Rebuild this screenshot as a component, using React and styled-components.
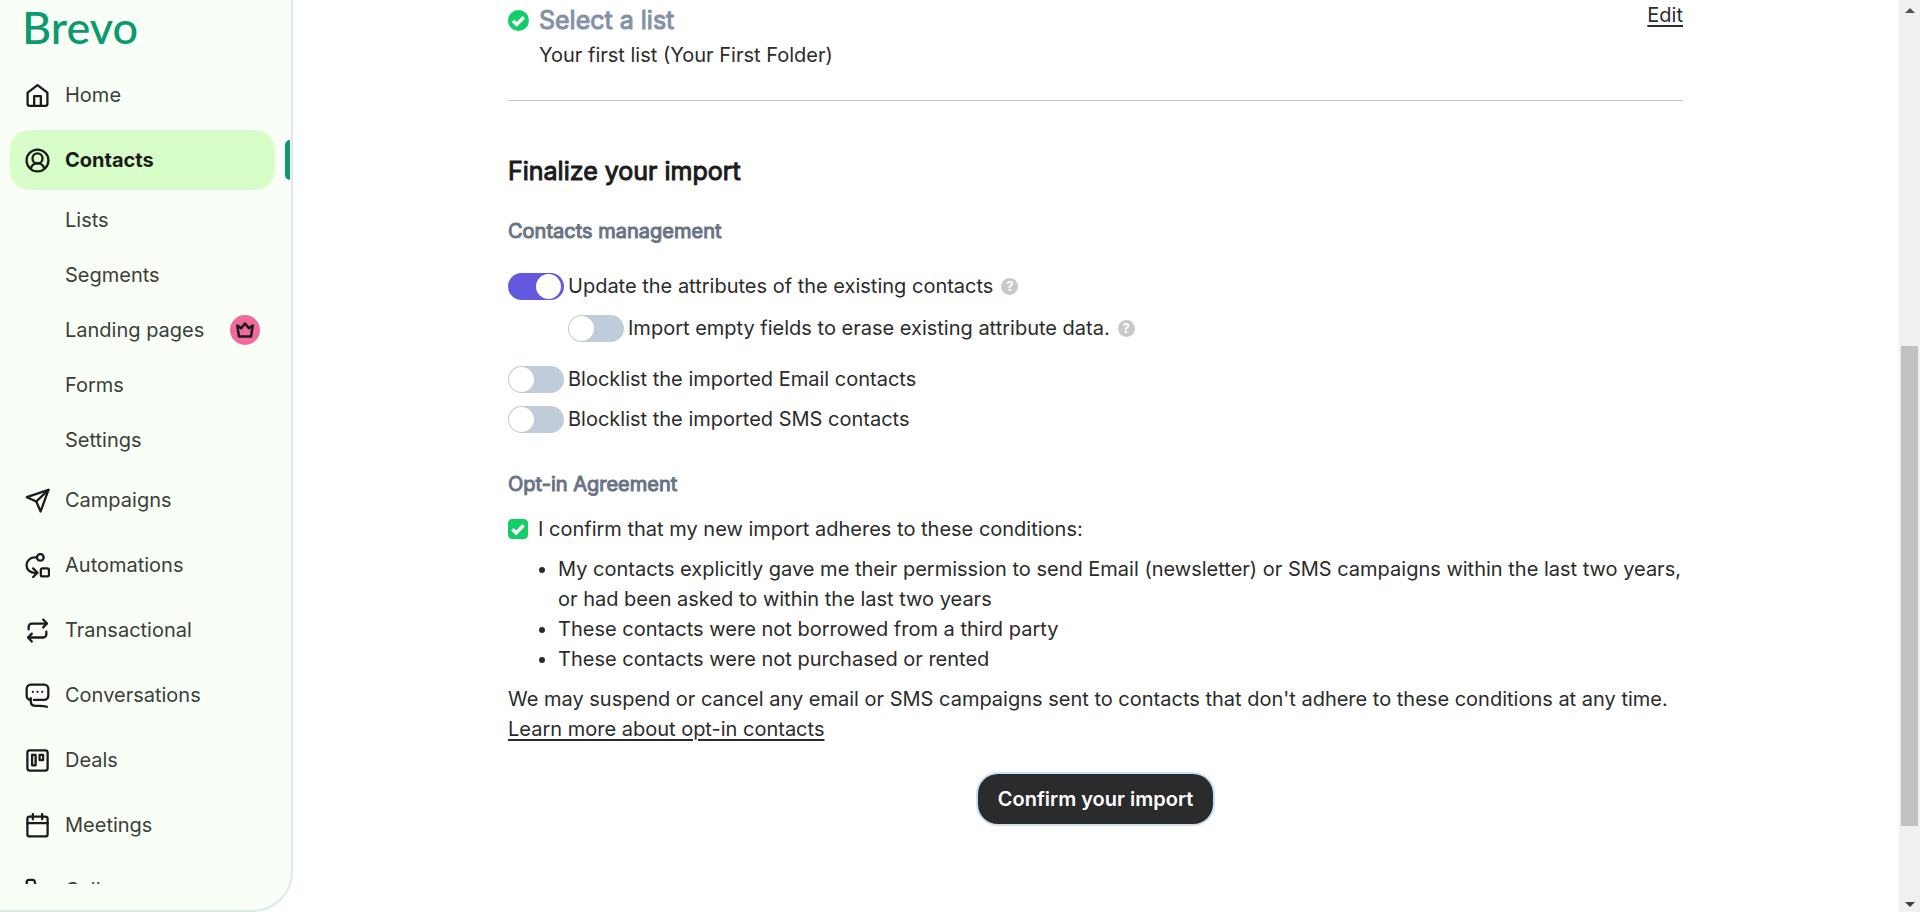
import React, { useState } from "react";
import styled, { createGlobalStyle, css } from "styled-components";

const GlobalStyle = createGlobalStyle`
  *, *::before, *::after { box-sizing: border-box; }
  body {
    margin: 0;
    background: #ffffff;
    color: #2b2b2b;
    font-family: Inter, "Liberation Sans", sans-serif;
    font-size: 20px;
    font-weight: 400;
    line-height: 30px;
  }
  a { color: inherit; }
`;

const Page = styled.div`
  display: flex;
  min-height: 100vh;
`;

/* ---------- sidebar ---------- */

const Sidebar = styled.aside`
  display: flex;
  flex-direction: column;
  flex: none;
  position: sticky;
  top: 0;
  width: 293px;
  height: 100vh;
  padding-bottom: 26px;
  background: #f9fff6;
  border-right: 2px solid #e0e9e9;
  border-bottom: 2px solid #d9ebe6;
  border-bottom-right-radius: 40px;
`;

const Brand = styled.a`
  flex: none;
  height: 65px;
  padding-left: 22px;
  color: #0b996e;
  font-family: Lato, "Liberation Sans", sans-serif;
  font-size: 45px;
  font-weight: 500;
  line-height: 54px;
  text-decoration: none;
`;

const Nav = styled.nav`
  flex: 1;
  min-height: 0;
  overflow: hidden;
  padding: 0 16px 0 10px;
`;

const NavList = styled.ul`
  display: flex;
  flex-direction: column;
  gap: 5px;
  margin: 0;
  padding: 0;
  list-style: none;
`;

const SubList = styled(NavList)`
  margin-top: 5px;
`;

const NavLink = styled.a`
  display: flex;
  align-items: center;
  gap: 15px;
  position: relative;
  height: 60px;
  padding-left: 15px;
  border-radius: 20px;
  color: #3a403a;
  text-decoration: none;

  svg {
    flex: none;
    width: 25px;
    height: 25px;
    color: #1b1b1b;
  }

  ${(p) =>
    p.$active &&
    css`
      background: #d7fec8;
      color: #1b1b1b;
      font-weight: 700;

      &::after {
        content: "";
        position: absolute;
        top: 10px;
        right: -15px;
        width: 5px;
        height: 40px;
        border-radius: 5px 0 0 5px;
        background: #0b996e;
      }
    `}
`;

const SubLink = styled.a`
  display: flex;
  align-items: center;
  justify-content: space-between;
  height: 50px;
  padding: 0 15px 0 55px;
  color: #3a403a;
  text-decoration: none;
`;

const PremiumBadge = styled.span`
  display: flex;
  align-items: center;
  justify-content: center;
  width: 30px;
  height: 30px;
  border-radius: 50%;
  background: #f06a9b;
  color: #1b1b1b;
`;

/* ---------- main ---------- */

const Main = styled.main`
  flex: 1;
  min-width: 0;
  padding: 0 21px 60px 20px;
`;

const Content = styled.div`
  max-width: 1175px;
  margin: 0 auto;
`;

const StepSummary = styled.section`
  display: flex;
  align-items: flex-start;
  justify-content: space-between;
  padding-bottom: 30px;
  border-bottom: 1px solid #c4c9ce;
`;

const StepInfo = styled.div`
  display: grid;
  grid-template-columns: 21px 1fr;
  align-items: center;
  column-gap: 10px;
  row-gap: 5px;
  padding-top: 5px;
`;

const StepTitle = styled.h2`
  margin: 0;
  color: #8492a6;
  font-size: 25px;
  font-weight: 400;
  line-height: 30px;
  -webkit-text-stroke: 1px currentColor;
`;

const StepText = styled.p`
  grid-column: 2;
  margin: 0;
`;

const TextLink = styled.a`
  text-decoration: underline;
  text-decoration-thickness: 2px;
  text-underline-offset: 3px;
`;

const Title = styled.h2`
  margin: 55px 0 30px;
  color: #1b1b1b;
  font-size: 25px;
  font-weight: 400;
  line-height: 30px;
  -webkit-text-stroke: 1px currentColor;
`;

const GroupTitle = styled.h3`
  margin: 0;
  color: #687484;
  font-size: 20px;
  font-weight: 400;
  line-height: 30px;
  -webkit-text-stroke: 1px currentColor;
`;

const Options = styled.div`
  display: flex;
  flex-direction: column;
  gap: 10px;
  margin: 25px 0 35px;
`;

const OptionGroup = styled.div`
  display: flex;
  flex-direction: column;
  gap: 12px;
  margin-bottom: 11px;
`;

const Option = styled.div`
  display: flex;
  align-items: center;
  gap: 8px;
  padding-left: ${(p) => (p.$nested ? "60px" : "0")};
`;

const OptionLabel = styled.label`
  display: flex;
  align-items: center;
  gap: 4px;
`;

const Switch = styled.input`
  appearance: none;
  flex: none;
  display: flex;
  align-items: center;
  width: 56px;
  height: 27px;
  margin: 0;
  padding: 1px;
  border-radius: 14px;
  background: #c0ccda;

  &::before {
    content: "";
    width: 25px;
    height: 25px;
    border-radius: 50%;
    background: #ffffff;
  }

  &:checked {
    justify-content: flex-end;
    padding-right: 3px;
    background: #6358de;
  }
`;

const Help = styled.button`
  width: 17px;
  height: 17px;
  padding: 0;
  border: 0;
  border-radius: 50%;
  background: #c9c9c9;
  color: #ffffff;
  font: 700 13px/17px Inter, sans-serif;
`;

const Consent = styled.label`
  display: flex;
  align-items: center;
  gap: 10px;
  margin-top: 15px;
`;

const TickBox = styled.span`
  display: grid;
  width: 20px;
  height: 20px;

  input,
  svg {
    grid-area: 1 / 1;
    width: 20px;
    height: 20px;
    margin: 0;
  }

  input {
    appearance: none;
    border: 1px solid #13ce66;
    border-radius: 4px;
  }

  input:checked {
    background: #13ce66;
  }

  svg {
    pointer-events: none;
  }
`;

const Conditions = styled.ul`
  margin: 10px 0;
  padding-left: 50px;
`;

const Paragraph = styled.p`
  margin: 0;
`;

const Actions = styled.div`
  display: flex;
  justify-content: center;
  margin-top: 30px;
`;

const PrimaryButton = styled.button`
  height: 50px;
  padding: 0 20px;
  border: 0;
  border-radius: 20px;
  background: #2b2b2b;
  box-shadow: 0 0 0 2px #cbdff2;
  color: #ffffff;
  font: 600 20px/30px Inter, "Liberation Sans", sans-serif;
`;

/* ---------- scroll bar ---------- */

const ScrollTrack = styled.div`
  display: flex;
  flex-direction: column;
  align-items: center;
  flex: none;
  position: sticky;
  top: 0;
  width: 21px;
  height: 100vh;
  padding: 8px 0 5px;
  background: #f0f0f0;

  svg {
    flex: none;
    width: 10px;
    height: 5px;
  }
`;

const ScrollSpace = styled.div`
  flex: ${(p) => p.$share};
`;

const ScrollThumb = styled.div`
  flex: 480;
  width: 17px;
  background: #c1c1c1;
`;

/* ---------- icons ---------- */

const Line = ({ children }) => (
  <svg
    viewBox="0 0 24 24"
    fill="none"
    stroke="currentColor"
    strokeWidth="2.200"
    strokeLinecap="round"
    strokeLinejoin="round"
    aria-hidden="true"
  >
    {children}
  </svg>
);

const HomeIcon = () => (
  <Line>
    <path d="M2.5 9.2 12 2l9.500 7.200V20a2 2 0 0 1-2 2h-15a2 2 0 0 1-2-2z" />
    <path d="M8.800 21.500V12.500h6.400v9" />
  </Line>
);

const ContactsIcon = () => (
  <Line>
    <circle cx="12" cy="12" r="10.500" />
    <circle cx="12" cy="10" r="4.800" />
    <path d="M5.500 19.800c.8-3 3.200-5 6.500-5s5.700 2 6.500 5" />
  </Line>
);

const CampaignsIcon = () => (
  <Line>
    <path d="M22.500 1.800 1.800 8.800l9 4.200 4.200 9.500z" />
    <path d="M22.500 1.800 10.800 13" />
  </Line>
);

const AutomationsIcon = () => (
  <Line>
    <circle cx="14.700" cy="4.200" r="3.200" />
    <path d="M11.500 4.200H9a7.700 7.700 0 0 0-7.500 7.600c0 4.200 3.300 7.200 7.500 7.200h2.500" />
    <path d="m7.800 14.800 4.200 4.200-4.200 4" />
    <rect x="15.200" y="14.700" width="7.800" height="7.800" rx="1.500" />
  </Line>
);

const TransactionalIcon = () => (
  <Line>
    <path d="m17.500 1.500 3.500 3.800-3.500 3.700" />
    <path d="M3.500 11V8.300a3 3 0 0 1 3-3H21" />
    <path d="M6.500 22.500 3 18.700 6.500 15" />
    <path d="M20.500 13v2.700a3 3 0 0 1-3 3H3" />
  </Line>
);

const ConversationsIcon = () => (
  <Line>
    <path d="M5.500 16.200a4 4 0 0 1-3.900-4V5.500a4 4 0 0 1 4-4h12.800a4 4 0 0 1 4 4v6.700a4 4 0 0 1-4 4H8.500" />
    <path d="M5.500 14.500v3c0 3 2 4.500 5 4.500h3.500c3 0 5 .3 7 .8" />
    <path d="M7.500 8.500h.01M12 8.500h.01M16.500 8.500h.01" />
  </Line>
);

const DealsIcon = () => (
  <Line>
    <rect x="2.300" y="2.300" width="19.400" height="19.400" rx="2.200" />
    <rect x="6.800" y="6.600" width="3.400" height="10" />
    <rect x="14" y="6.600" width="3.400" height="5" />
  </Line>
);

const MeetingsIcon = () => (
  <Line>
    <rect x="2.300" y="3.500" width="19.400" height="19" rx="2.200" />
    <path d="M2.300 9.800h19.400M7.500 1v5M16.500 1v5" />
  </Line>
);

const CallsIcon = () => (
  <Line>
    <path d="M22 17v3a2 2 0 0 1-2.200 2C10 21.500 2.500 14 1.600 4.200A2.200 2.200 0 0 1 3.800 1.800h3.500a2 2 0 0 1 2 1.700c.2 1.100.5 2.100.8 3.100a2 2 0 0 1-.4 2.100L8.400 10a16 16 0 0 0 6 6l1.300-1.300a2 2 0 0 1 2.100-.4c1 .3 2 .6 3 .8a2 2 0 0 1 1.200 1.900z" />
  </Line>
);

const CrownIcon = () => (
  <svg width="20" height="18" viewBox="0 0 20 18" fill="none" stroke="currentColor" strokeWidth="2.500" strokeLinejoin="round" aria-hidden="true">
    <path d="M2.300 4.500 4 15.500h12l1.700-11-3.900 2.800L10 2.500 6.200 7.300z" />
  </svg>
);

const DoneIcon = () => (
  <svg width="21" height="21" viewBox="0 0 21 21" fill="none" aria-hidden="true">
    <circle cx="10.500" cy="10.500" r="10.500" fill="#13ce66" />
    <path d="m5 10.800 3.800 3.600 7-7.200" stroke="#ffffff" strokeWidth="3.500" />
  </svg>
);

const TickIcon = () => (
  <svg viewBox="0 0 20 20" fill="none" aria-hidden="true">
    <path d="m4.500 10.300 3.600 3.600 7.400-7.600" stroke="#ffffff" strokeWidth="3.500" />
  </svg>
);

/* ---------- page ---------- */

const subPages = [
  { label: "Lists" },
  { label: "Segments" },
  { label: "Landing pages", premium: true },
  { label: "Forms" },
  { label: "Settings" },
];

const pages = [
  { label: "Home", Icon: HomeIcon },
  { label: "Contacts", Icon: ContactsIcon, children: subPages },
  { label: "Campaigns", Icon: CampaignsIcon },
  { label: "Automations", Icon: AutomationsIcon },
  { label: "Transactional", Icon: TransactionalIcon },
  { label: "Conversations", Icon: ConversationsIcon },
  { label: "Deals", Icon: DealsIcon },
  { label: "Meetings", Icon: MeetingsIcon },
  { label: "Calls", Icon: CallsIcon },
];

function Toggle({ label, on = false, nested, help }) {
  const [checked, setChecked] = useState(on);
  return (
    <Option $nested={nested}>
      <OptionLabel>
        <Switch type="checkbox" role="switch" checked={checked} onChange={() => setChecked(!checked)} />
        {label}
      </OptionLabel>
      {help && <Help type="button">?</Help>}
    </Option>
  );
}

export default function App() {
  const [agreed, setAgreed] = useState(true);

  return (
    <>
      <GlobalStyle />
      <Page>
        <Sidebar>
          <Brand href="#">Brevo</Brand>
          <Nav>
            <NavList>
              {pages.map(({ label, Icon, children }) => (
                <li key={label}>
                  <NavLink href="#" $active={Boolean(children)}>
                    <Icon />
                    {label}
                  </NavLink>
                  {children && (
                    <SubList>
                      {children.map((sub) => (
                        <li key={sub.label}>
                          <SubLink href="#">
                            {sub.label}
                            {sub.premium && (
                              <PremiumBadge>
                                <CrownIcon />
                              </PremiumBadge>
                            )}
                          </SubLink>
                        </li>
                      ))}
                    </SubList>
                  )}
                </li>
              ))}
            </NavList>
          </Nav>
        </Sidebar>

        <Main>
          <Content>
            <StepSummary>
              <StepInfo>
                <DoneIcon />
                <StepTitle>Select a list</StepTitle>
                <StepText>Your first list (Your First Folder)</StepText>
              </StepInfo>
              <TextLink href="#">Edit</TextLink>
            </StepSummary>

            <Title>Finalize your import</Title>

            <GroupTitle>Contacts management</GroupTitle>
            <Options>
              <OptionGroup>
                <Toggle label="Update the attributes of the existing contacts" on help />
                <Toggle label="Import empty fields to erase existing attribute data." nested help />
              </OptionGroup>
              <Toggle label="Blocklist the imported Email contacts" />
              <Toggle label="Blocklist the imported SMS contacts" />
            </Options>

            <GroupTitle>Opt-in Agreement</GroupTitle>
            <Consent>
              <TickBox>
                <input type="checkbox" checked={agreed} onChange={() => setAgreed(!agreed)} />
                {agreed && <TickIcon />}
              </TickBox>
              I confirm that my new import adheres to these conditions:
            </Consent>
            <Conditions>
              <li>
                My contacts explicitly gave me their permission to send Email (newsletter) or SMS campaigns within the
                last two years, or had been asked to within the last two years
              </li>
              <li>These contacts were not borrowed from a third party</li>
              <li>These contacts were not purchased or rented</li>
            </Conditions>
            <Paragraph>
              We may suspend or cancel any email or SMS campaigns sent to contacts that don't adhere to these
              conditions at any time. <TextLink href="#">Learn more about opt-in contacts</TextLink>
            </Paragraph>

            <Actions>
              <PrimaryButton type="button">Confirm your import</PrimaryButton>
            </Actions>
          </Content>
        </Main>

        <ScrollTrack aria-hidden="true">
          <svg viewBox="0 0 10 5">
            <path d="M0 5 5 0l5 5z" fill="#505050" />
          </svg>
          <ScrollSpace $share={333} />
          <ScrollThumb />
          <ScrollSpace $share={76} />
          <svg viewBox="0 0 10 5">
            <path d="M0 0h10L5 5z" fill="#404040" />
          </svg>
        </ScrollTrack>
      </Page>
    </>
  );
}
